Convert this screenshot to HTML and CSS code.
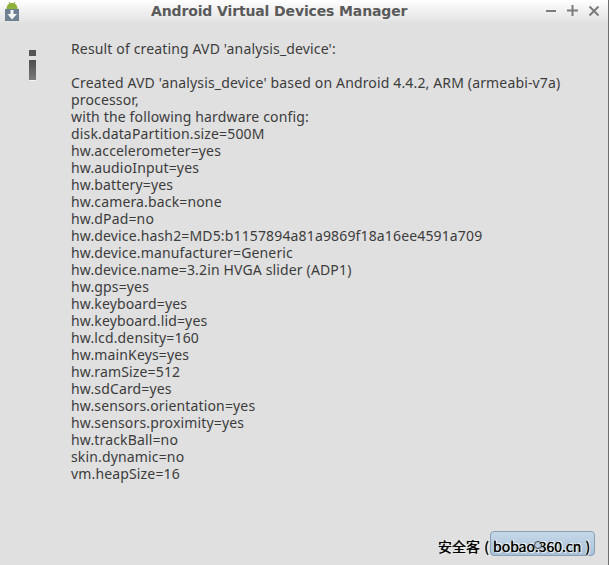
FILE: index.html
```html
<!DOCTYPE html>
<html>
<head>
<meta charset="utf-8">
<title>Android Virtual Devices Manager</title>
<link rel="stylesheet" href="styles.css">
</head>
<body>
<div class="window">
  <header class="titlebar">
    <svg class="app-icon" width="15" height="21" viewBox="0 0 15 21">
      <path d="M1.500 9 C1.500 5 4 3 7 3 C10 3 12.500 5 12.500 9 Z" fill="#8fb03a"/>
      <path d="M4 2 L5 4 M10 2 L9 4" stroke="#8fb03a" stroke-width="1"/>
      <rect x="0" y="9" width="14" height="12" fill="#6f8093"/>
      <path d="M5.500 10 H8.500 V14 H12 L7 19.500 L2.500 14 H5.500 Z" fill="#f4f6f8"/>
    </svg>
    <h1 class="title">Android Virtual Devices Manager</h1>
    <div class="controls">
      <svg width="10" height="10" viewBox="0 0 10 10"><path d="M0 5 H10" class="ctl"/></svg>
      <svg width="11" height="11" viewBox="0 0 11 11"><path d="M0 5.500 H11 M5.500 0 V11" class="ctl"/></svg>
      <svg width="10" height="10" viewBox="0 0 10 10"><path d="M0.500 0.500 L9.500 9.500 M9.500 0.500 L0.500 9.500" class="ctl"/></svg>
    </div>
  </header>
  <main class="body">
    <div class="info-icon"><span class="dot"></span><span class="stem"></span></div>
    <div class="message">Result of creating AVD 'analysis_device':

Created AVD 'analysis_device' based on Android 4.4.2, ARM (armeabi-v7a)
processor,
with the following hardware config:
disk.dataPartition.size=500M
hw.accelerometer=yes
hw.audioInput=yes
hw.battery=yes
hw.camera.back=none
hw.dPad=no
hw.device.hash2=MD5:b1157894a81a9869f18a16ee4591a709
hw.device.manufacturer=Generic
hw.device.name=3.2in HVGA slider (ADP1)
hw.gps=yes
hw.keyboard=yes
hw.keyboard.lid=yes
hw.lcd.density=160
hw.mainKeys=yes
hw.ramSize=512
hw.sdCard=yes
hw.sensors.orientation=yes
hw.sensors.proximity=yes
hw.trackBall=no
skin.dynamic=no
vm.heapSize=16</div>
  </main>
  <div class="ok-button"></div>
  <div class="watermark">安全客 ( bobao.360.cn )</div>
  <span class="ring"></span>
</div>
</body>
</html>
```
FILE: styles.css
```css
html, body { margin: 0; padding: 0; }
body { width: 609px; height: 565px; overflow: hidden; }
.window {
  position: relative;
  box-sizing: border-box;
  width: 609px;
  height: 565px;
  background: #e0e0e0;
  border-right: 1px solid #6e6e6e;
  font-family: "Noto Sans", sans-serif;
  display: flex;
  flex-direction: column;
}
.titlebar {
  height: 24px;
  flex: none;
  display: flex;
  align-items: flex-start;
  background: linear-gradient(#ffffff, #e0e0e0);
}
.app-icon { margin: 0 0 0 5px; flex: none; }
.title {
  margin: 3px 0 0 131px;
  font: bold 14px/17px "DejaVu Sans", sans-serif;
  letter-spacing: -0.13px;
  color: #5a5a5a;
  white-space: nowrap;
}
.controls {
  margin: 5px 9px 0 auto;
  display: flex;
  align-items: center;
  gap: 11px;
}
.ctl { stroke: #7c7c7c; stroke-width: 2; fill: none; }
.body {
  display: flex;
  padding: 16px 0 0 29px;
}
.info-icon {
  width: 7px;
  margin-right: 35px;
  padding-top: 10px;
  display: flex;
  flex-direction: column;
  flex: none;
}
.dot { display: block; height: 6px; background: #555; margin-bottom: 4px; }
.stem { display: block; height: 20px; background: linear-gradient(#4e4e4e, #7a7a7a); border-bottom: 1px solid #f4f4f4; }
.message {
  white-space: pre-wrap;
  font-size: 14px;
  line-height: 17px;
  letter-spacing: 0.15px;
  color: #3c3c3c;
  width: 530px;
}
.ok-button {
  position: absolute;
  left: 490px;
  top: 531px;
  width: 105px;
  height: 25px;
  box-sizing: border-box;
  border: 1px solid #8aa0b5;
  border-radius: 4px;
  background: linear-gradient(#c6d8e8, #a8c2da);
}
.watermark {
  position: absolute;
  left: 438px;
  top: 537px;
  font: 14px/18px "Noto Sans CJK SC", "Noto Sans", sans-serif;
  word-spacing: 1px;
  color: #000;
  white-space: pre;
  text-shadow: 0 0 1px #000, 1px 1px 0 #fff, -1px 0 0 #fff, 1px -1px 0 #fff;
}
.ring {
  position: absolute;
  left: 534px;
  top: 541px;
  width: 6px;
  height: 6px;
  border: 1px solid #444;
  border-radius: 50%;
}
```
